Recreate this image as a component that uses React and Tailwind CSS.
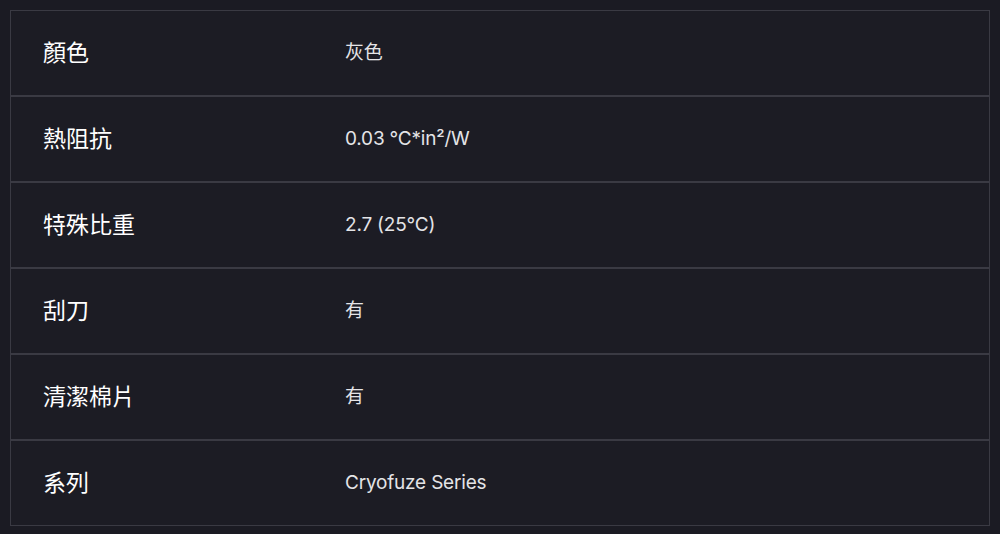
const specs = [
    { label: "顏色", value: "灰色" },
    { label: "熱阻抗", value: "0.03 °C*in²/W" },
    { label: "特殊比重", value: "2.7 (25°C)" },
    { label: "刮刀", value: "有" },
    { label: "清潔棉片", value: "有" },
    { label: "系列", value: "Cryofuze Series" },
];

export default function App() {
    return (
        <div
            className="min-h-screen bg-[#1b1b23] pt-[10px] px-[10px]"
            style={{ fontFamily: "Inter, 'Noto Sans CJK TC', sans-serif" }}
        >
            <div className="w-[980px] border border-[#3a3a43] bg-[#1c1c24]">
                {specs.map((row, index) => (
                    <div
                        key={index}
                        className={`flex items-center ${
                            index < specs.length - 1
                                ? "h-[86px] border-b-2 border-[#3a3a43]"
                                : "h-[84px]"
                        }`}
                    >
                        <div className="w-[334px] pl-[32px] text-[23px] font-normal text-white">
                            {row.label}
                        </div>
                        <div className="flex-1 text-[19px] tracking-[-0.2px] text-[#e4e4e7]">
                            {row.value}
                        </div>
                    </div>
                ))}
            </div>
        </div>
    );
}
